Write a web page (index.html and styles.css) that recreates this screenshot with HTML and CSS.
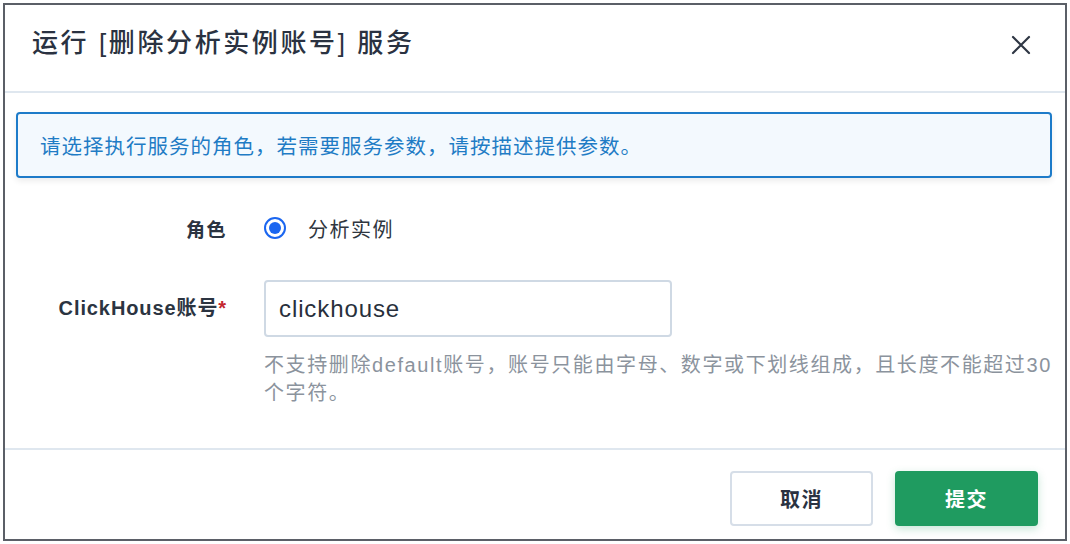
FILE: index.html
```html
<!DOCTYPE html>
<html lang="zh-CN">
<head>
<meta charset="utf-8">
<link rel="stylesheet" href="styles.css">
</head>
<body>
<div class="dialog">
  <div class="header">
    <div class="title">运行 [删除分析实例账号] 服务</div>
    <div class="close">
      <svg width="20" height="20" viewBox="0 0 20 20"><path d="M2 2 L18 18 M18 2 L2 18" stroke="#2f3744" stroke-width="2.2" fill="none" stroke-linecap="round"/></svg>
    </div>
  </div>
  <div class="body">
    <div class="alert">请选择执行服务的角色，若需要服务参数，请按描述提供参数。</div>
    <div class="form">
      <div class="row row-role">
        <div class="label">角色</div>
        <div class="control">
          <label class="radio"><span class="radio-dot"></span><span class="radio-text">分析实例</span></label>
        </div>
      </div>
      <div class="row row-account">
        <div class="label">ClickHouse账号<span class="req">*</span></div>
        <div class="control">
          <div class="input">clickhouse</div>
          <div class="help">不支持删除default账号，账号只能由字母、数字或下划线组成，且长度不能超过30个字符。</div>
        </div>
      </div>
    </div>
  </div>
  <div class="footer">
    <button class="btn btn-cancel">取消</button>
    <button class="btn btn-submit">提交</button>
  </div>
</div>
</body>
</html>
```

FILE: styles.css
```css
* { box-sizing: border-box; }
html, body { margin: 0; padding: 0; background: #ffffff; }
body {
  font-family: "Liberation Sans", "Noto Sans CJK SC", sans-serif;
  color: #2b3441;
}
.dialog {
  margin: 3px 0 0 3px;
  width: 1064px;
  height: 538px;
  border: 2px solid #5b5f67;
  display: flex;
  flex-direction: column;
  background: #fff;
}
.header {
  height: 88px;
  border-bottom: 2px solid #dfe7ef;
  display: flex;
  align-items: center;
  justify-content: space-between;
  padding: 0 34px 0 27px;
  flex: none;
}
.title {
  font-size: 26px;
  letter-spacing: 2.6px;
  font-weight: 500;
  color: #2a3241;
  margin-top: -15px;
}
.close { width: 20px; height: 20px; margin-top: -6px; }
.close svg { display: block; }
.body {
  flex: 1;
  padding: 19px 13px 0 11px;
  border-bottom: 2px solid #dfe7ef;
}
.alert {
  height: 66px;
  border: 2px solid #1d7bc9;
  border-radius: 4px;
  background: #f3f9fe;
  color: #1f7cc5;
  font-size: 20.5px;
  letter-spacing: 1px;
  display: flex;
  align-items: center;
  padding-left: 22px;
  box-shadow: 0 3px 6px rgba(0, 0, 0, 0.08);
}
.form { padding-top: 32px; }
.row { display: flex; align-items: flex-start; }
.label {
  width: 211px;
  text-align: right;
  font-size: 19px;
  letter-spacing: 1.5px;
  font-weight: 700;
  color: #2b3441;
  flex: none;
}
.row-account .label { font-size: 20px; letter-spacing: 0.9px; line-height: 56px; }
.control { margin-left: 37px; flex: 1; }
.row-role { height: 36px; align-items: center; }
.radio { display: flex; align-items: center; }
.radio-dot {
  width: 22px; height: 22px;
  border-radius: 50%;
  border: 2.5px solid #1b66f0;
  display: flex; align-items: center; justify-content: center;
  flex: none;
}
.radio-dot::after {
  content: "";
  width: 12px; height: 12px;
  border-radius: 50%;
  background: #1b66f0;
}
.radio-text { margin-left: 22px; font-size: 20px; letter-spacing: 1.5px; color: #2f3640; }
.row-account { margin-top: 34px; }
.input {
  width: 408px;
  height: 57px;
  border: 2px solid #cfd9e4;
  border-radius: 4px;
  font-size: 24px;
  letter-spacing: 0.9px;
  color: #28303c;
  display: flex;
  align-items: center;
  padding-left: 13px;
}
.help {
  margin-top: 14px;
  margin-right: -10px;
  font-size: 20px;
  letter-spacing: 1.6px;
  line-height: 28px;
  color: #8b939d;
}
.req { color: #c4262e; }
.footer {
  height: 89px;
  flex: none;
  display: flex;
  justify-content: flex-end;
  align-items: flex-start;
  padding: 21px 27px 0 0;
  gap: 22px;
}
.btn {
  font-family: "Liberation Sans", "Noto Sans CJK SC", sans-serif;
  font-size: 20px;
  letter-spacing: 1.5px;
  font-weight: 700;
  width: 143px;
  height: 55px;
  border-radius: 4px;
  cursor: pointer;
}
.btn-cancel {
  background: #fff;
  border: 2px solid #d6dee8;
  color: #2a3241;
}
.btn-submit {
  background: #1f9b60;
  border: none;
  color: #fff;
  box-shadow: 0 3px 8px rgba(31, 155, 96, 0.25);
}
```
